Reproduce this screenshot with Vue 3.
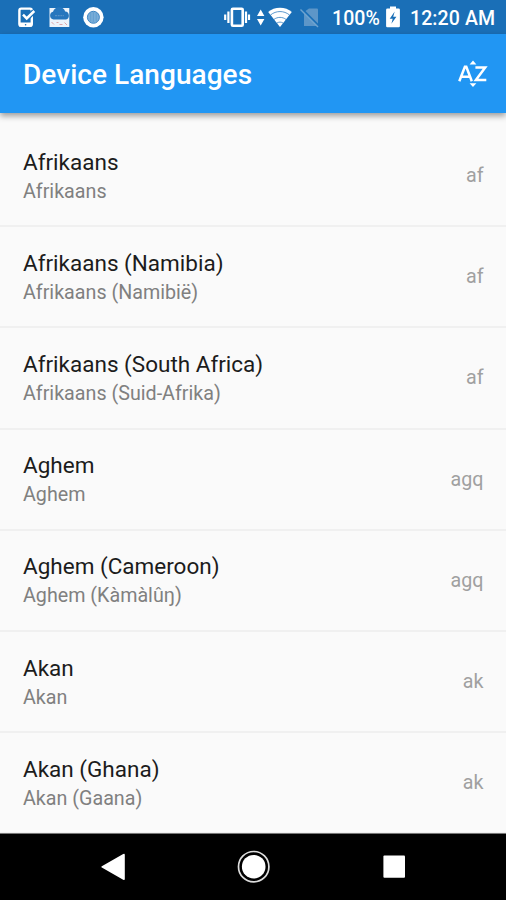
<script setup>
const languages = [
  { name: 'Afrikaans', native: 'Afrikaans', code: 'af' },
  { name: 'Afrikaans (Namibia)', native: 'Afrikaans (Namibië)', code: 'af' },
  { name: 'Afrikaans (South Africa)', native: 'Afrikaans (Suid-Afrika)', code: 'af' },
  { name: 'Aghem', native: 'Aghem', code: 'agq' },
  { name: 'Aghem (Cameroon)', native: 'Aghem (Kàmàlûŋ)', code: 'agq' },
  { name: 'Akan', native: 'Akan', code: 'ak' },
  { name: 'Akan (Ghana)', native: 'Akan (Gaana)', code: 'ak' },
]
</script>

<template>
  <div class="screen">
    <div class="status">
      <svg class="notifications" width="90" height="34" viewBox="0 0 90 34">
        <rect x="4.4" y="8.6" width="12.4" height="17.2" rx="1.8" fill="none" stroke="#fff" stroke-width="2.4" />
        <path d="M4 22.5h13v4H4z" fill="#fff" />
        <circle cx="10.6" cy="24.7" r=".8" fill="#1a6fb7" />
        <path d="M8 15l3.7 3.7L19 11.3" fill="none" stroke="#1a6fb7" stroke-width="5" />
        <path d="M8 14.7l3.7 3.7L19.3 11" fill="none" stroke="#fff" stroke-width="2.5" />
        <rect x="34.5" y="8" width="19.8" height="19" fill="#edf4fb" />
        <path d="M38.5 19.5a4 4 0 0 1-.5-7.8 6.5 6.5 0 0 1 12.2-.2 4.1 4.1 0 0 1 .8 8z" fill="#2676bd" />
        <path d="M40 15.6h9" stroke="#5590c6" stroke-width="1.2" stroke-dasharray="2 .7" />
        <path d="M36.5 22l2.5 2.5m2.5-2h2m1 2h3m2-2l2.5 2.5" stroke="#dba6aa" stroke-width="1" />
        <circle cx="78.4" cy="17.3" r="10.2" fill="#fff" />
        <circle cx="78.4" cy="17.3" r="6" fill="#79add9" stroke="#3e86c3" />
        <path d="M75.7 13v8.5M78.4 12v10M81.2 13v8.5" stroke="#5c9dce" stroke-width=".8" />
      </svg>
      <svg class="signals" width="98" height="34" viewBox="0 0 98 34">
        <rect x="7.9" y="8.8" width="10.8" height="17" rx="1" fill="none" stroke="#fff" stroke-width="2.6" />
        <path d="M4.4 11.5v11.5M1.2 14.5v5.5M22 11.5v11.5M25 14.5v5.5" stroke="#fff" stroke-width="2.2" />
        <path d="M33 16h7.4l-3.7-6.5zM33 19h7.4l-3.7 6.5z" fill="#fff" />
        <path d="M44.2 12C50 6.3 62 6.3 67.8 12L56 27z" fill="#fff" />
        <path d="M46.5 15c5.5-4.6 13.5-4.6 19 0M50 19.4c3.5-2.7 8.5-2.7 12 0M53 23c2-1.2 4-1.2 6 0" fill="none" stroke="#1a6fb7" stroke-width=".7" />
        <path d="M80 12l5-3.5h8q1 0 1 1V26H80z" fill="#5d96c8" />
        <path d="M78 9l17 17" stroke="#1a6fb7" stroke-width="2" />
        <path d="M76.5 9.5L94 27" stroke="#6fa4d0" stroke-width="1.5" />
      </svg>
      <span class="percent">100%</span>
      <svg class="battery" width="14" height="34" viewBox="0 0 14 34">
        <path d="M4 6.5h6v2h2.5q1.4 0 1.4 1.2v16.3q0 1.2-1.2 1.2H1.3Q.1 27.2.1 26V9.7q0-1.2 1.4-1.2H4z" fill="#fff" />
        <path d="M8.7 11.5L3.7 18.7h3l-1.3 5 5-7H7.2z" fill="#1a6fb7" />
      </svg>
      <span class="time">12:20 AM</span>
    </div>
    <header class="appbar">
      <h1>Device Languages</h1>
      <svg class="sort" width="30" height="28" viewBox="0 0 30 28">
        <path d="M11.6 4.4L15 .6l3.4 3.8zM11.6 23.2L15 27l3.4-3.8z" fill="#fff" />
        <path d="M1.3 21.2L6.9 6.8h1.4L13.8 21.2M3.5 16.8h8.2M17.4 7.5h9.8L17.9 20h10.4" fill="none" stroke="#fff" stroke-width="2.5" />
      </svg>
    </header>
    <main class="list">
      <div v-for="item in languages" :key="item.name" class="row">
        <div class="labels">
          <div class="name">{{ item.name }}</div>
          <div class="native">{{ item.native }}</div>
        </div>
        <span class="code">{{ item.code }}</span>
      </div>
    </main>
    <nav class="navbar">
      <svg width="28" height="32" viewBox="0 0 28 32"><path d="M1.8 15.2L23.2 3q1.6-.9 1.6.9v24q0 1.7-1.6.8L1.8 16.6q-1.2-.7 0-1.4z" fill="#fff" /></svg>
      <svg width="34" height="34" viewBox="0 0 34 34"><circle cx="16.7" cy="16.7" r="15.2" fill="none" stroke="#ddd" stroke-width="1.7" /><circle cx="16.7" cy="16.7" r="11.8" fill="#fff" /></svg>
      <svg width="28" height="32" viewBox="0 0 28 32"><rect x="3.4" y="4.4" width="21.6" height="22.3" rx="1" fill="#fff" /></svg>
    </nav>
  </div>
</template>

<style>
body { margin: 0; }
</style>

<style scoped>
.screen {
  width: 506px;
  height: 900px;
  display: flex;
  flex-direction: column;
  overflow: hidden;
  background: #fafafa;
  font-family: Roboto, sans-serif;
}
.status {
  flex: 0 0 34px;
  display: flex;
  align-items: center;
  background: #1a6fb7;
  color: #fff;
  font-size: 19.5px;
  font-weight: 500;
  line-height: 30px;
  white-space: nowrap;
}
svg { display: block; flex-shrink: 0; }
.notifications { margin-left: 15px; }
.signals { margin-left: 119px; }
.percent { width: 48px; margin-left: 10px; padding-top: 4px; letter-spacing: .1px; }
.battery { margin-left: 6px; }
.time { margin-left: 10px; padding-top: 4px; letter-spacing: .1px; }
.appbar {
  flex: 0 0 79px;
  display: flex;
  align-items: center;
  justify-content: space-between;
  box-sizing: border-box;
  padding: 0 18px 0 23px;
  background: #2196f3;
  color: #fff;
  box-shadow: 0 3px 6px rgba(0, 0, 0, .38);
  z-index: 1;
}
h1 { margin: 0; padding-top: 2px; font-size: 28px; font-weight: 500; line-height: 34px; letter-spacing: .05px; white-space: nowrap; }
.list { flex: 1; min-height: 0; overflow: hidden; padding-top: 13px; }
.row {
  height: 101.2px;
  box-sizing: border-box;
  padding: 0 22.5px 0 23px;
  display: flex;
  align-items: center;
  justify-content: space-between;
  border-bottom: 2px solid #f0f0f0;
}
.labels { display: flex; flex-direction: column; gap: 1px; padding-top: 2.2px; }
.name { font-size: 22.5px; line-height: 29px; color: #1c1c1c; }
.native { font-size: 19.7px; line-height: 28px; color: #808080; }
.code { padding-top: 1px; font-size: 19.7px; line-height: 28px; color: #a0a0a0; }
.navbar {
  flex: 0 0 67px;
  box-sizing: border-box;
  display: flex;
  align-items: center;
  justify-content: space-between;
  padding: 0 98px 0 100px;
  background: #000;
  border-top: 1px solid #777;
}
</style>
